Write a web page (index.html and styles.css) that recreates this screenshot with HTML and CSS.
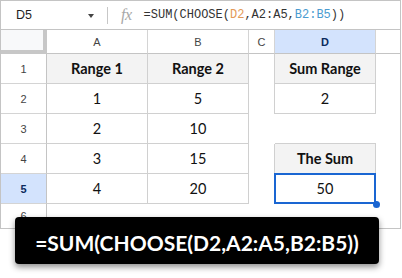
FILE: index.html
```html
<!DOCTYPE html>
<html lang="en">
<head>
    <meta charset="UTF-8">
    <meta name="viewport" content="width=device-width, initial-scale=1.0">
    <title>SUM with CHOOSE</title>
    <link rel="stylesheet" href="styles.css">
</head>
<body>
    <div class="page">
        <div class="sheet">
            <div class="fbar">
                <div class="namebox">D5</div>
                <span class="caret"></span>
                <span class="sep"></span>
                <span class="fx">fx</span>
                <div class="formula">=SUM(CHOOSE(<span class="ref-d">D2</span>,A2:A5,<span class="ref-b">B2:B5</span>))</div>
            </div>
            <div class="grid">
                <div class="corner"></div>
                <div class="colhead">A</div>
                <div class="colhead">B</div>
                <div class="colhead">C</div>
                <div class="colhead active">D</div>
                <div class="colhead last"></div>

                <div class="rowhead">1</div>
                <div class="cell head">Range 1</div>
                <div class="cell head">Range 2</div>
                <div class="gap edge"></div>
                <div class="cell head">Sum Range</div>
                <div class="gap"></div>

                <div class="rowhead">2</div>
                <div class="cell">1</div>
                <div class="cell">5</div>
                <div class="gap edge"></div>
                <div class="cell">2</div>
                <div class="gap"></div>

                <div class="rowhead">3</div>
                <div class="cell">2</div>
                <div class="cell">10</div>
                <div class="gap"></div>
                <div class="gap under"></div>
                <div class="gap"></div>

                <div class="rowhead">4</div>
                <div class="cell">3</div>
                <div class="cell">15</div>
                <div class="gap edge"></div>
                <div class="cell head">The Sum</div>
                <div class="gap"></div>

                <div class="rowhead active">5</div>
                <div class="cell">4</div>
                <div class="cell">20</div>
                <div class="gap edge"></div>
                <div class="cell selected">50<span class="handle"></span></div>
                <div class="gap"></div>

                <div class="rowhead end">6</div>
                <div class="gap"></div>
                <div class="gap"></div>
                <div class="gap"></div>
                <div class="gap"></div>
                <div class="gap"></div>
            </div>
        </div>
        <div class="caption">=SUM(CHOOSE(D2,A2:A5,B2:B5))</div>
    </div>
</body>
</html>
```

FILE: styles.css
```css
* {
    box-sizing: border-box;
}
body {
    margin: 0;
    background: #fff;
    font-family: "Liberation Sans", Arial, sans-serif;
    color: #1f1f1f;
}
.page {
    position: relative;
    width: 402px;
    height: 278px;
}
.sheet {
    width: 401px;
    border: 1px solid #c4c4c4;
}

/* formula bar */
.fbar {
    height: 29px;
    border-bottom: 1px solid #c4c4c4;
    display: flex;
    align-items: center;
}
.namebox {
    width: 87px;
    padding-left: 15px;
    font-size: 12.5px;
    color: #1f1f1f;
}
.caret {
    width: 0;
    height: 0;
    border-left: 3.5px solid transparent;
    border-right: 3.5px solid transparent;
    border-top: 4px solid #444;
    margin-top: 1px;
}
.sep {
    width: 1px;
    height: 17px;
    background: #c7c7c7;
    margin-left: 13px;
}
.fx {
    margin-left: 13px;
    font-family: "Liberation Serif", serif;
    font-style: italic;
    font-size: 16px;
    color: #a8a8a8;
    letter-spacing: -0.5px;
}
.formula {
    margin-left: 12px;
    font-family: "Liberation Mono", monospace;
    font-size: 12px;
    color: #333;
}
.ref-d {
    color: #e39a57;
}
.ref-b {
    color: #4a9bd0;
}

/* grid */
.grid {
    display: grid;
    grid-template-columns: 46px 101px 101px 26px 101px 1fr;
    grid-template-rows: 24px repeat(5, 30px) 24px;
}
.corner {
    background: #f8f9fa;
    border-right: 4px solid #c7c7c7;
    border-bottom: 4px solid #c7c7c7;
}
.colhead {
    display: flex;
    align-items: center;
    justify-content: center;
    font-size: 11px;
    color: #444;
    border-right: 1px solid #d4d4d4;
    border-bottom: 1px solid #c4c4c4;
}
.colhead.last {
    border-right: none;
}
.colhead.active {
    background: #d3e3fd;
    color: #0b2a5c;
    font-weight: bold;
}
.rowhead {
    display: flex;
    align-items: center;
    justify-content: center;
    font-size: 11px;
    color: #444;
    border-right: 1px solid #c4c4c4;
    border-bottom: 1px solid #d4d4d4;
}
.rowhead.active {
    background: #d3e3fd;
    color: #0b2a5c;
    font-weight: bold;
}
.rowhead.end {
    border-bottom: none;
}
.cell {
    display: flex;
    align-items: center;
    justify-content: center;
    font-family: Lato, "Open Sans", sans-serif;
    font-size: 14.5px;
    color: #111;
    border-right: 1px solid #d0d0d0;
    border-bottom: 1px solid #d0d0d0;
}
.cell.head {
    background: #f3f3f3;
    font-weight: bold;
}
.gap.edge {
    border-right: 1px solid #d0d0d0;
}
.gap.under {
    border-bottom: 1px solid #d0d0d0;
}
.cell.selected {
    position: relative;
}
.cell.selected::after {
    content: "";
    position: absolute;
    left: -1px;
    top: -1px;
    right: -1px;
    bottom: -1px;
    border: 2px solid #1a66d2;
}
.handle {
    position: absolute;
    right: -5px;
    bottom: -5px;
    width: 7px;
    height: 7px;
    border-radius: 50%;
    background: #1a66d2;
    z-index: 1;
}

/* caption */
.caption {
    position: absolute;
    left: 15px;
    top: 217px;
    width: 364px;
    height: 47px;
    background: #000;
    border-radius: 4px;
    box-shadow: 0 3px 6px rgba(0, 0, 0, 0.45);
    color: #fff;
    font-family: Lato, "Open Sans", sans-serif;
    font-weight: bold;
    font-size: 21px;
    display: flex;
    align-items: center;
    justify-content: center;
    padding-top: 3px;
}
```
